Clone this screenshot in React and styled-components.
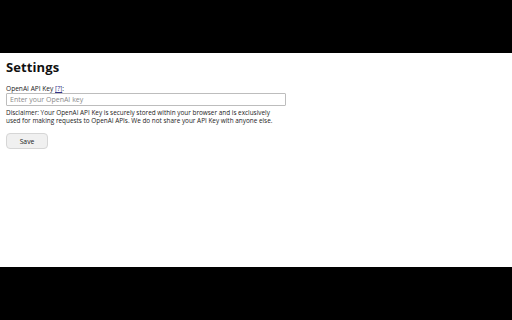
import React from "react";
import styled, { createGlobalStyle } from "styled-components";

const Global = createGlobalStyle`
  html, body {
    margin: 0;
    padding: 0;
    background: #000;
    height: 100%;
  }
  #root {
    height: 100%;
  }
`;

const Frame = styled.div`
  height: 320px;
  display: flex;
  flex-direction: column;
  justify-content: center;
`;

const Page = styled.div`
  height: 214px;
  background: #fff;
  padding: 5px 6px;
  box-sizing: border-box;
  font-family: "Open Sans", "DejaVu Sans", sans-serif;
  color: #111;
`;

const Title = styled.h1`
  margin: 0 0 8px 0;
  font-size: 13px;
  font-weight: 700;
  letter-spacing: 0.1px;
  color: #111;
`;

const Label = styled.label`
  display: block;
  font-size: 6.6px;
  line-height: 9px;
  color: #222;

  & > a {
    color: #33338a;
    text-decoration: underline;
  }
`;

const Input = styled.input`
  display: block;
  width: 280px;
  height: 13px;
  box-sizing: border-box;
  margin: 0 0 3px 0;
  padding: 0 3px;
  font-family: inherit;
  font-size: 7px;
  border: 1px solid #bdbdbd;
  border-radius: 1px;
  outline: none;

  &::placeholder {
    color: #8a8a8a;
  }
`;

const Disclaimer = styled.p`
  margin: 0;
  font-size: 6.4px;
  line-height: 8px;
  color: #222;
  width: 275px;
`;

const SaveButton = styled.button`
  display: block;
  margin-top: 8px;
  width: 42px;
  height: 16px;
  font-family: inherit;
  font-size: 6.8px;
  color: #222;
  background: #f0f0f0;
  border: 1px solid #d6d6d6;
  border-radius: 4px;
  padding: 0;
`;

export default function App() {
  return (
    <>
      <Global />
      <Frame>
        <Page>
          <Title>Settings</Title>
          <Label>
            OpenAI API Key <a href="#">[?]</a>:
          </Label>
          <Input placeholder="Enter your OpenAI key" />
          <Disclaimer>
            Disclaimer: Your OpenAI API Key is securely stored within your browser and is exclusively
            used for making requests to OpenAI APIs. We do not share your API Key with anyone else.
          </Disclaimer>
          <SaveButton>Save</SaveButton>
        </Page>
      </Frame>
    </>
  );
}
